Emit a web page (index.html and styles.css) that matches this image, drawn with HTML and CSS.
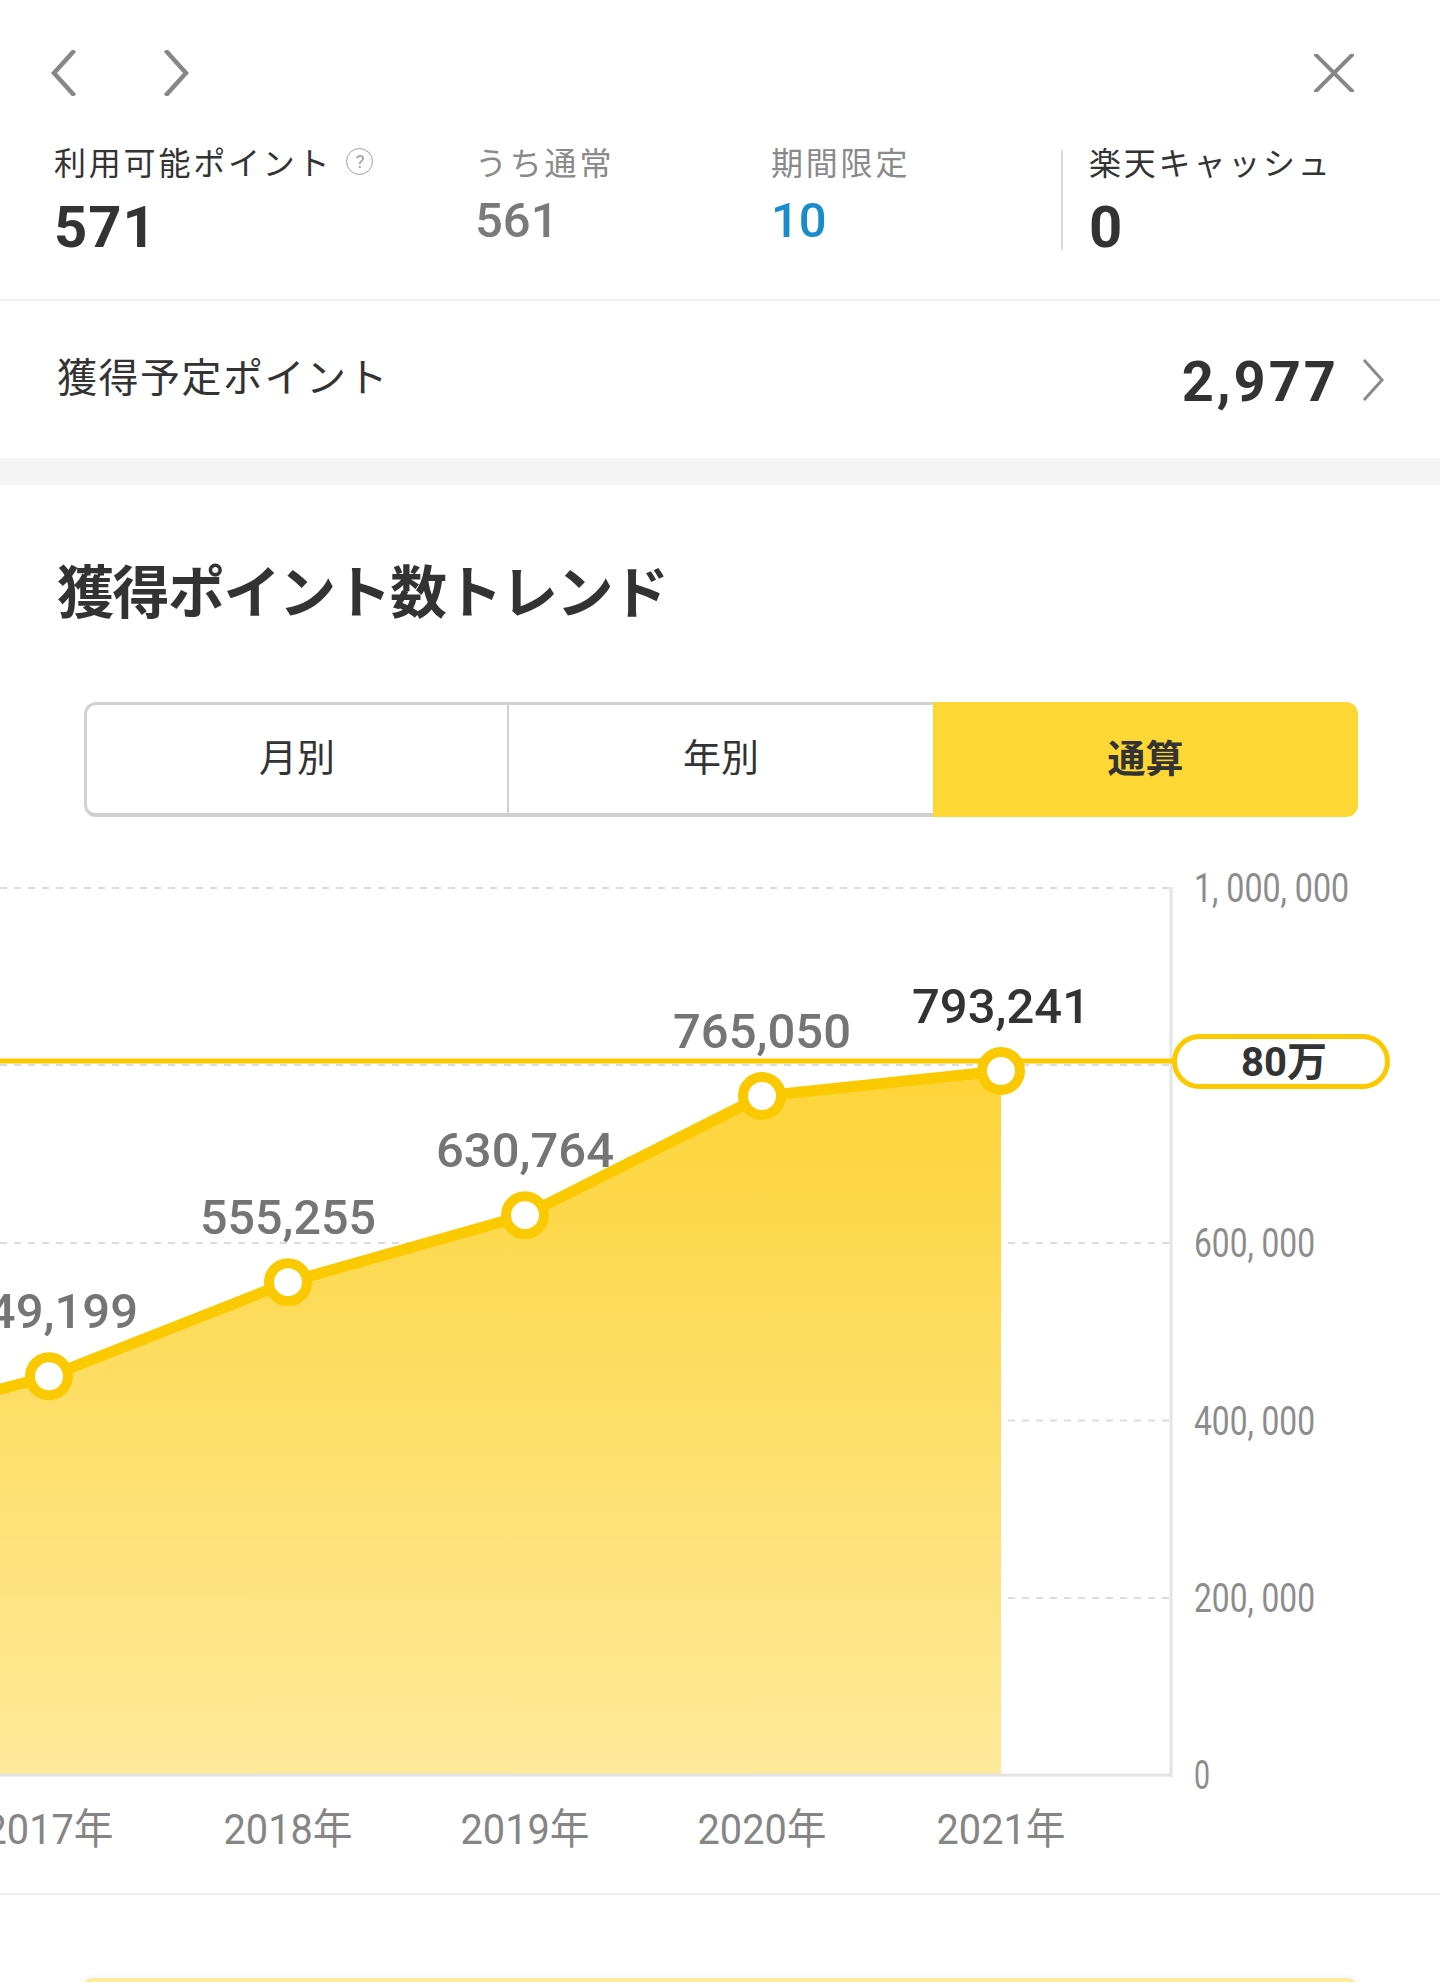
FILE: index.html
```html
<!DOCTYPE html>
<html lang="ja">
<head>
<meta charset="utf-8">
<title>獲得ポイント数トレンド</title>
<link rel="stylesheet" href="styles.css">
</head>
<body>
<header class="nav">
  <button class="nav-btn back" aria-label="戻る">
    <svg width="28" height="46" viewBox="0 0 28 46"><path d="M24 2 L5 23 L24 44" /></svg>
  </button>
  <button class="nav-btn fwd" aria-label="進む">
    <svg width="28" height="46" viewBox="0 0 28 46"><path d="M4 2 L23 23 L4 44" /></svg>
  </button>
  <span class="nav-spacer"></span>
  <button class="nav-btn close" aria-label="閉じる">
    <svg width="40" height="38" viewBox="0 0 40 38"><path d="M2 1 L38 37 M38 1 L2 37" /></svg>
  </button>
</header>

<section class="stats">
  <div class="stat">
    <div class="stat-label"><span class="label-text">利用可能ポイント<span class="help">?</span></span></div>
    <div class="stat-value big">571</div>
  </div>
  <div class="stat">
    <div class="stat-label muted"><span class="label-text">うち通常</span></div>
    <div class="stat-value sub">561</div>
  </div>
  <div class="stat">
    <div class="stat-label muted"><span class="label-text">期間限定</span></div>
    <div class="stat-value sub blue">10</div>
  </div>
  <div class="stat cash">
    <div class="stat-label"><span class="label-text">楽天キャッシュ</span></div>
    <div class="stat-value big">0</div>
  </div>
</section>

<a class="pending-row" href="#">
  <span class="pending-label">獲得予定ポイント</span>
  <span class="pending-value">2,977</span>
  <svg class="pending-chev" width="24" height="44" viewBox="0 0 24 44"><path d="M3 2 L21 22 L3 42" /></svg>
</a>

<div class="band"></div>

<section class="trend">
  <h2 class="trend-title">獲得ポイント数トレンド</h2>
  <div class="tabs">
    <span class="tab first">月別</span>
    <span class="tab">年別</span>
    <span class="tab active">通算</span>
  </div>

  <svg class="chart" width="1440" height="1044" viewBox="0 0 1440 1044">
    <defs>
      <linearGradient id="areaFill" x1="0" y1="0" x2="0" y2="1">
        <stop offset="0" stop-color="#fdd438"/>
        <stop offset="1" stop-color="#fee99a"/>
      </linearGradient>
    </defs>
    <g class="grid">
      <line x1="0" y1="39" x2="1172" y2="39"/>
      <line x1="0" y1="216" x2="1172" y2="216"/>
      <line x1="0" y1="394" x2="1172" y2="394"/>
      <line x1="0" y1="571.5" x2="1172" y2="571.5"/>
      <line x1="0" y1="749" x2="1172" y2="749"/>
    </g>
    <path class="area" d="M-189 590 L49 527.3 L288 433.2 L525 366.2 L762 247 L1001 222 L1001 926 L-189 926 Z"/>
    <line class="axis" x1="0" y1="926" x2="1172" y2="926"/>
    <line class="axis" x1="1171" y1="38" x2="1171" y2="928"/>
    <line class="goal" x1="0" y1="212" x2="1176" y2="212"/>
    <polyline class="trend-line" points="-189,590 49,527.3 288,433.2 525,366.2 762,247 1001,222"/>
    <g class="dots">
      <circle cx="49" cy="527.3" r="19"/>
      <circle cx="288" cy="433.2" r="19"/>
      <circle cx="525" cy="366.2" r="19"/>
      <circle cx="762" cy="247" r="19"/>
      <circle cx="1001" cy="222" r="19"/>
    </g>
    <g class="val">
      <text x="49" y="479" textLength="178" lengthAdjust="spacingAndGlyphs">449,199</text>
      <text x="288" y="385" textLength="176" lengthAdjust="spacingAndGlyphs">555,255</text>
      <text x="525" y="318" textLength="178" lengthAdjust="spacingAndGlyphs">630,764</text>
      <text x="762" y="199" textLength="178" lengthAdjust="spacingAndGlyphs">765,050</text>
      <text class="latest" x="1001" y="174" textLength="178" lengthAdjust="spacingAndGlyphs">793,241</text>
    </g>
    <rect class="goal-pill" x="1174.5" y="187.5" width="213" height="50" rx="25"/>
    <text class="goal-text" x="1284" y="227" textLength="86" lengthAdjust="spacingAndGlyphs">80万</text>
    <g class="ylab">
      <text x="1194" y="53" textLength="155" lengthAdjust="spacingAndGlyphs">1, 000, 000</text>
      <text x="1194" y="408" textLength="121" lengthAdjust="spacingAndGlyphs">600, 000</text>
      <text x="1194" y="585.5" textLength="121" lengthAdjust="spacingAndGlyphs">400, 000</text>
      <text x="1194" y="763" textLength="121" lengthAdjust="spacingAndGlyphs">200, 000</text>
      <text x="1194" y="940" textLength="16" lengthAdjust="spacingAndGlyphs">0</text>
    </g>
    <g class="xlab">
      <text x="49" y="995" textLength="129" lengthAdjust="spacingAndGlyphs">2017年</text>
      <text x="288" y="995" textLength="129" lengthAdjust="spacingAndGlyphs">2018年</text>
      <text x="525" y="995" textLength="129" lengthAdjust="spacingAndGlyphs">2019年</text>
      <text x="762" y="995" textLength="129" lengthAdjust="spacingAndGlyphs">2020年</text>
      <text x="1001" y="995" textLength="129" lengthAdjust="spacingAndGlyphs">2021年</text>
    </g>
  </svg>
</section>

<div class="footer">
  <div class="footer-btn"></div>
</div>
</body>
</html>
```
FILE: styles.css
```css
* { box-sizing: border-box; }
html, body { margin: 0; padding: 0; background: #fff; }
body {
  width: 1440px;
  height: 1982px;
  overflow: hidden;
  font-family: "Noto Sans CJK JP", "Noto Sans", sans-serif;
  color: #333;
}

/* top navigation */
.nav {
  height: 145px;
  display: flex;
  align-items: center;
  padding: 0 86px 0 49px;
}
.nav-btn {
  border: 0;
  background: none;
  padding: 0;
  display: flex;
  cursor: pointer;
}
.nav-btn path { fill: none; stroke: #878787; stroke-width: 4.5; stroke-linecap: square; }
.nav-btn.fwd { margin-left: 86px; }
.nav-btn.close path { stroke-width: 4; }
.nav-spacer { flex: 1; }

/* stats */
.stats {
  height: 156px;
  display: grid;
  grid-template-columns: 421px 296px 293px 1fr;
  padding: 2px 0 0 54px;
  border-bottom: 2px solid #efefef;
}
.stat { display: flex; flex-direction: column; align-items: flex-start; }
.stat > * { flex-shrink: 0; }
.stat.cash {
  border-left: 2px solid #d8d8d8;
  padding-left: 26px;
  height: 100px;
  margin-top: 3px;
  margin-left: -3px;
}
.stat.cash .stat-label { margin-top: -3px; }
.stat-label {
  height: 28px;
  display: flex;
  align-items: flex-end;
  font-size: 32px;
  letter-spacing: 2.8px;
  color: #333;
}
.stat-label.muted { color: #8a8a8a; }
.label-text {
  line-height: 28px;
  display: flex;
  align-items: center;
  white-space: nowrap;
}
.help {
  width: 27px;
  height: 27px;
  margin-left: 14px;
  border: 1.5px solid #a0a0a0;
  border-radius: 50%;
  display: inline-flex;
  align-items: center;
  justify-content: center;
  font-family: "Roboto", sans-serif;
  font-size: 19px;
  line-height: 1;
  letter-spacing: 0;
  color: #a0a0a0;
}
.stat-value {
  font-family: "Roboto", "Noto Sans", sans-serif;
  line-height: 1;
}
.stat-value.big {
  margin-top: 23px;
  font-size: 58px;
  font-weight: 700;
  color: #333;
  letter-spacing: 1px;
}
.stat-value.sub {
  margin-top: 21px;
  font-size: 49px;
  font-weight: 500;
  color: #7a7a7a;
}
.stat-value.blue { color: #1a8bcb; }

/* pending points row */
.pending-row {
  height: 157px;
  display: flex;
  align-items: center;
  padding: 0 55px 0 57px;
  text-decoration: none;
  color: #333;
}
.pending-label {
  flex: 1;
  font-size: 40px;
  letter-spacing: 1.5px;
  margin-bottom: 9px;
}
.pending-value {
  font-family: "Roboto", sans-serif;
  font-weight: 700;
  font-size: 56px;
  letter-spacing: 3px;
  margin-right: 22px;
  margin-top: 4px;
}
.pending-chev path { fill: none; stroke: #8a8a8a; stroke-width: 3; }

.band { height: 27px; background: #f4f4f4; }

/* trend */
.trend {
  padding-top: 75px;
  border-bottom: 2px solid #efefef;
}
.trend-title {
  margin: 0 0 0 57px;
  font-size: 57px;
  line-height: 1;
  font-weight: 700;
  color: #333;
  letter-spacing: -1.5px;
}
.tabs {
  margin: 85px 82px 0 84px;
  height: 115px;
  display: flex;
}
.tab {
  flex: 1;
  display: flex;
  align-items: center;
  justify-content: center;
  padding-bottom: 9px;
  font-size: 38px;
  color: #333;
  border-top: 3px solid #d2d2d2;
  border-bottom: 4px solid #cfcfcf;
  border-left: 2px solid #d2d2d2;
}
.tab.first {
  border-left-width: 3px;
  border-radius: 12px 0 0 12px;
  flex: 0 0 423px;
}
.tab.active {
  background: #fdd835;
  border: 0;
  border-radius: 0 12px 12px 0;
  font-weight: 700;
  flex: 0 0 425px;
}

.chart { display: block; margin-top: 32px; overflow: hidden; }
.chart .grid line { stroke: #dcdcdc; stroke-width: 2; stroke-dasharray: 7 7; }
.chart .area { fill: url(#areaFill); }
.chart .axis { stroke: #e4e4e4; stroke-width: 3; }
.chart .goal { stroke: #fbc900; stroke-width: 5; }
.chart .trend-line { fill: none; stroke: #fbc900; stroke-width: 11; stroke-linejoin: round; }
.chart .dots circle { fill: #fff; stroke: #fbc900; stroke-width: 10; }
.chart .val text {
  font-family: "Roboto", sans-serif;
  font-size: 48px;
  font-weight: 500;
  fill: #757575;
  text-anchor: middle;
}
.chart .val text.latest { fill: #333; }
.chart .goal-pill { fill: #fff; stroke: #fbc900; stroke-width: 5; }
.chart .goal-text {
  font-family: "Roboto", "Noto Sans CJK JP", sans-serif;
  font-size: 40px;
  font-weight: 700;
  fill: #333;
  text-anchor: middle;
}
.chart .ylab text {
  font-family: "Roboto", sans-serif;
  font-size: 40px;
  font-weight: 400;
  fill: #8c8c8c;
}
.chart .xlab text {
  font-family: "Roboto", "Noto Sans CJK JP", sans-serif;
  font-size: 42px;
  font-weight: 400;
  fill: #858585;
  text-anchor: middle;
}

/* bottom button peeking in */
.footer { padding: 83px 81px 0 81px; }
.footer-btn {
  height: 60px;
  border-radius: 12px;
  background: #fdeca0;
  box-shadow: 0 -2px 6px rgba(0,0,0,0.04);
}
```
